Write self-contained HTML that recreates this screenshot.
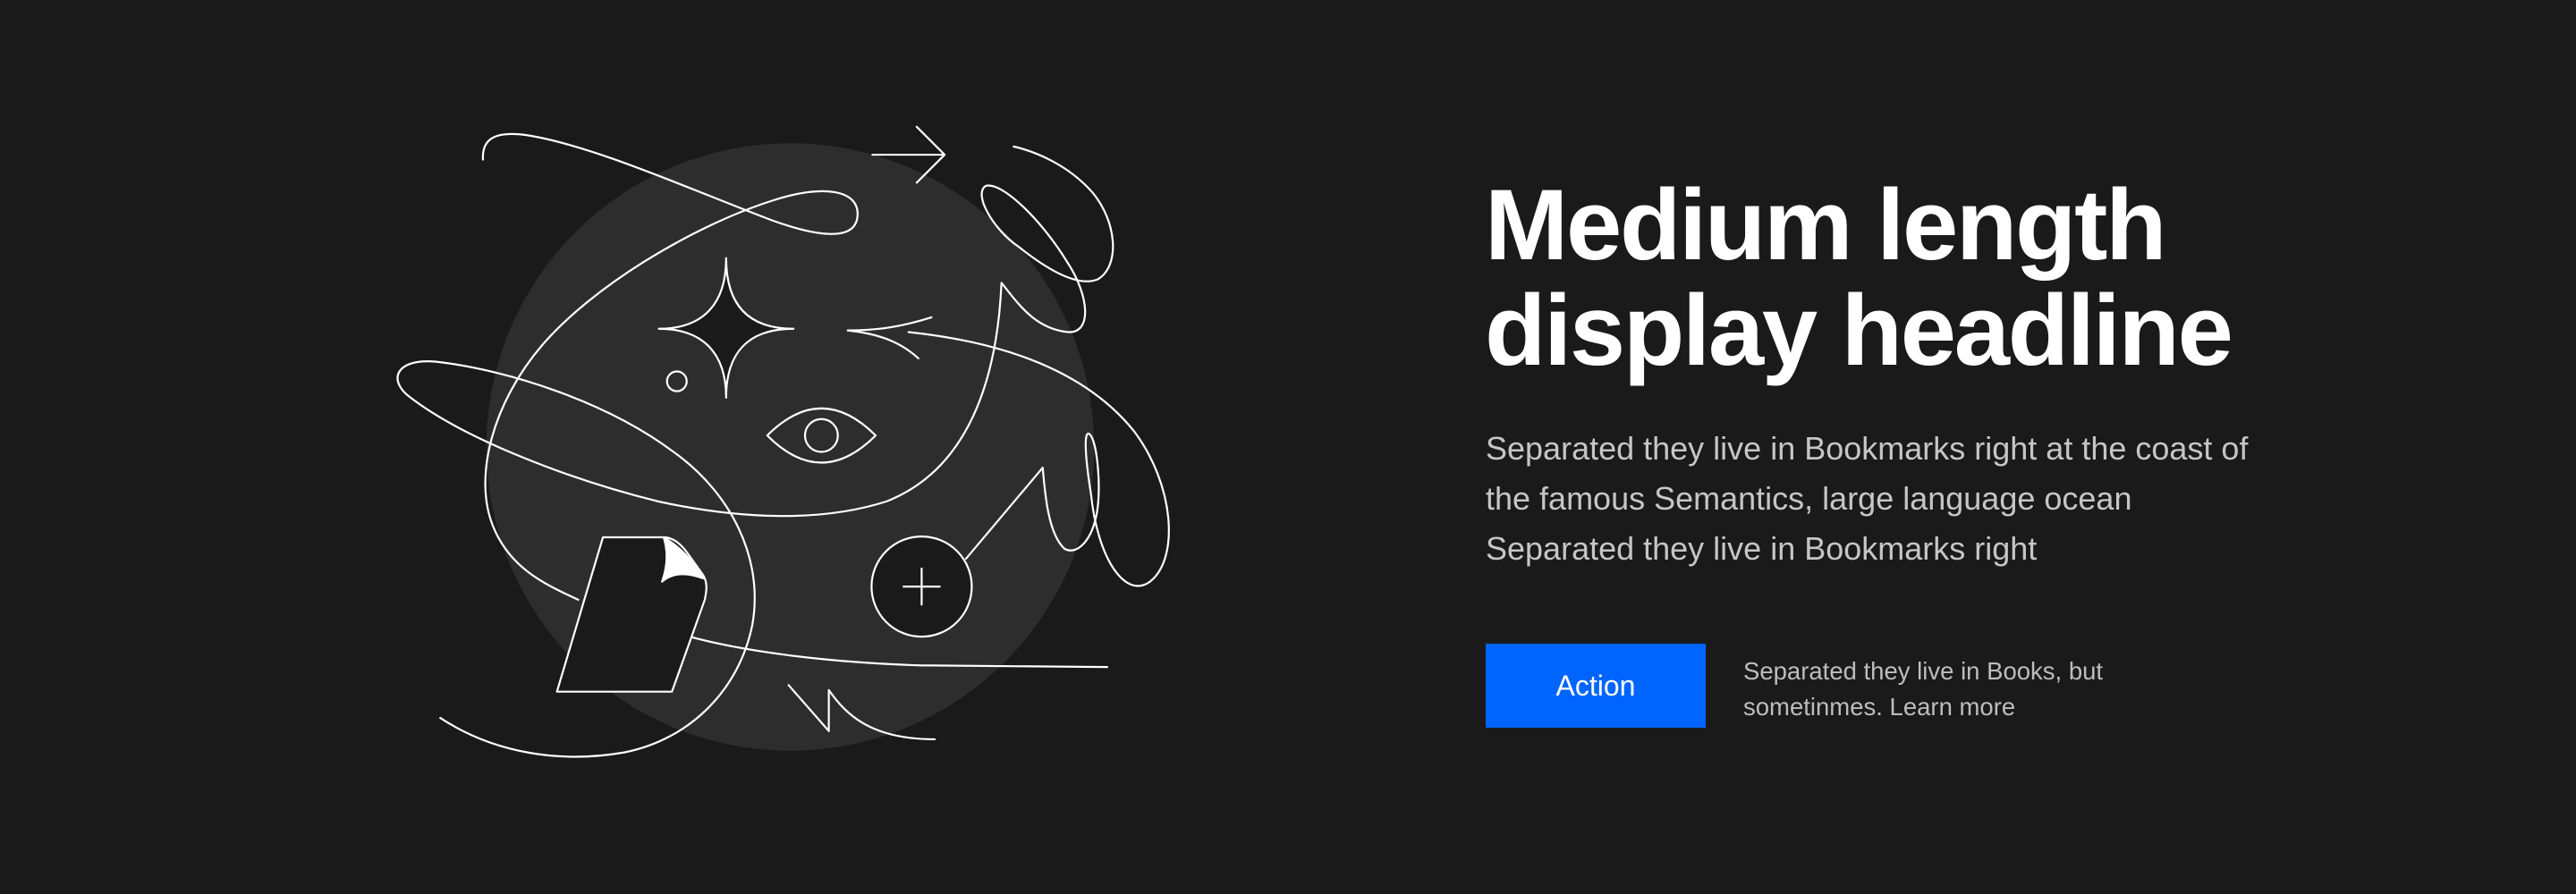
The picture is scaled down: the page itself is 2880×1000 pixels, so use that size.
<!DOCTYPE html>
<html><head><meta charset="utf-8"><style>
html,body{margin:0;padding:0;background:#1a1a1a;}
body{width:2880px;height:1000px;position:relative;overflow:hidden;font-family:"Liberation Sans",Arial,sans-serif;}
svg{position:absolute;left:0;top:0;}
.h{position:absolute;left:1660px;top:193px;font-size:112px;line-height:118px;font-weight:700;color:#fff;letter-spacing:-2.3px;white-space:nowrap;}
.p{position:absolute;left:1661px;top:474px;font-size:36px;line-height:56px;color:#c6c6c6;white-space:nowrap;letter-spacing:0px;}
.btn{position:absolute;left:1661px;top:720px;width:246px;height:94px;background:#0065ff;color:#fff;font-size:32px;line-height:94px;text-align:center;}
.s{position:absolute;left:1949px;top:731px;font-size:27.5px;line-height:40px;color:#bdbdbd;white-space:nowrap;}
</style></head><body>
<svg width="2880" height="1000" viewBox="0 0 1568 544">
<circle cx="481" cy="272" r="185" fill="#2d2d2d"/>
<g fill="none" stroke="#fff" stroke-width="1.2" stroke-linecap="round" stroke-linejoin="round">
<path d="M531,94 L575,94 M558,77 L575,94 L558,111"/>
<path d="M294,97 C293,82 305,80 320,82 C360,88 420,115 470,134 C495,143 521,148 522,131 C523,115 500,112 470,122 C420,138 360,175 330,210 C300,245 288,290 300,320 C310,345 330,355 352,365"/>
<path d="M268,437 C300,458 340,465 380,458 C420,450 450,420 458,380 C465,340 445,300 410,275 C370,245 310,225 265,220 C240,218 236,232 250,242 C280,265 340,290 400,305 C450,316 500,318 540,305 C590,285 607,230 609.6,172 C620,185 630,200 650,202 C665,203 663,180 650,160 C635,135 610,110 600,113 C592,118 605,140 620,150 C635,162 655,175 668,170 C682,162 680,135 665,117 C650,100 630,92 617,89"/>
<path d="M553,202 C610,208 660,225 690,262 C715,295 718,340 700,354 C685,365 668,340 664,300 C660,275 660,262 663,264 C668,268 670,295 668,310 C665,330 655,338 648,334 C638,325 636,300 634.7,284.6 L588,340"/>
<path d="M567,193 C545,200 530,201 516,201 C535,203 548,208 559,218"/>
<path d="M418,387 C450,396 500,403 560,405 L674,406"/>
<path d="M480,417 L504.5,445 L504.5,420 C515,435 530,450 569,450"/>
<path d="M467,265 Q500,232 533,265 Q500,298 467,265Z"/>
<circle cx="500" cy="265" r="10"/>
<circle cx="412" cy="232" r="6"/>
<path d="M442,157 C442,185 455,200 483,200 C455,200 442,215 442,242 C442,215 428,200 401,200 C428,200 442,185 442,157Z" fill="#1a1a1a"/>
<circle cx="561" cy="357" r="30.5" fill="#1a1a1a"/>
<path d="M550,357 L572,357 M561,346 L561,368"/>
<path d="M367,327 L404,327 C410,327 415,332 418,336 L428,350 C431,355 430,360 429,365 L409,421 L339,421 Z" fill="#1a1a1a"/>
<path d="M404,327 Q418,335 428,352 Q412,346 403,354 Q408,340 404,327Z" fill="#fff"/>
</g>
</svg>
<div class="h">Medium length<br>display headline</div>
<div class="p">Separated they live in Bookmarks right at the coast of<br>the famous Semantics, large language ocean<br>Separated they live in Bookmarks right</div>
<div class="btn">Action</div>
<div class="s">Separated they live in Books, but<br>sometinmes. Learn more</div>
</body></html>
